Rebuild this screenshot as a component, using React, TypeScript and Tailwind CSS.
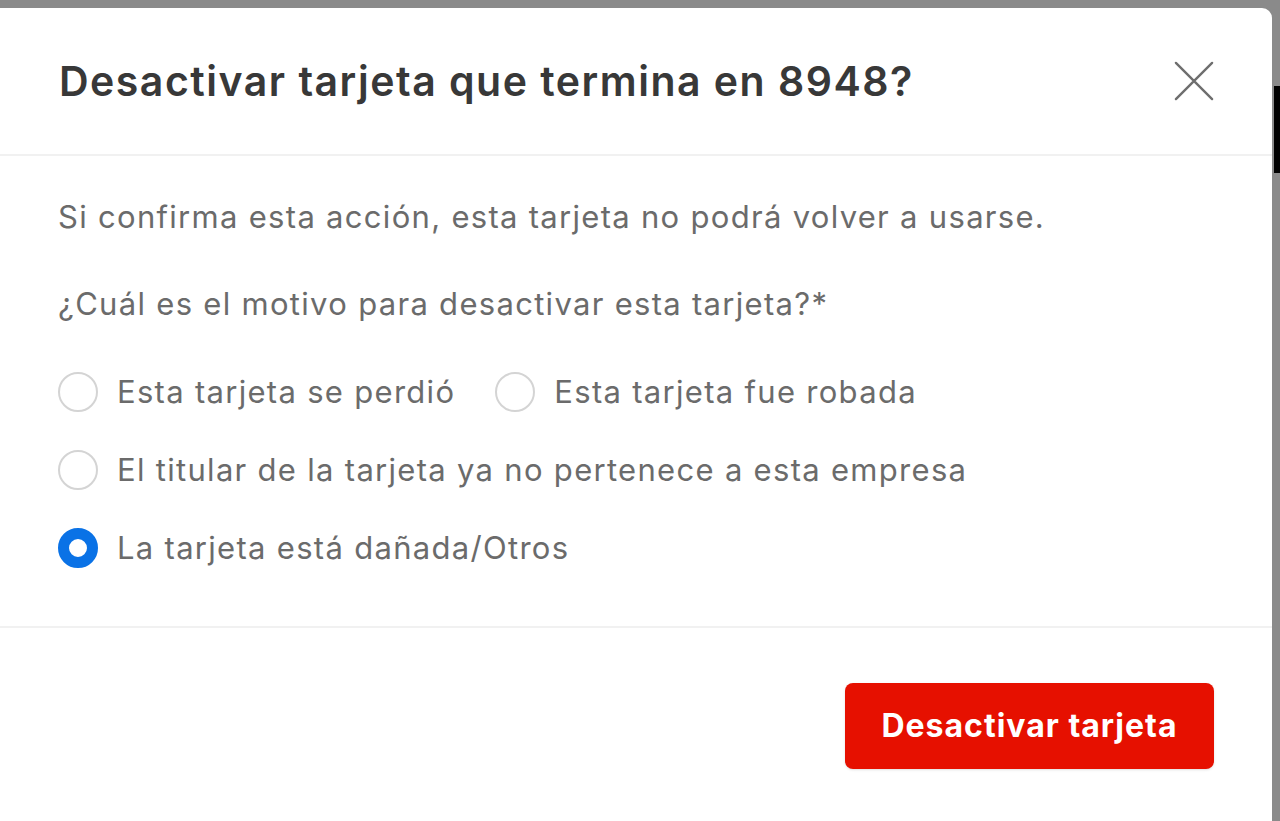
import { useState } from "react";

const reasons = [
  { id: "lost", label: "Esta tarjeta se perdió" },
  { id: "stolen", label: "Esta tarjeta fue robada" },
  { id: "left", label: "El titular de la tarjeta ya no pertenece a esta empresa" },
  { id: "damaged", label: "La tarjeta está dañada/Otros" },
];

function Radio({
  checked,
  label,
  onSelect,
}: {
  checked: boolean;
  label: string;
  onSelect: () => void;
}) {
  return (
    <button
      type="button"
      onClick={onSelect}
      className="flex h-10 items-center gap-[19px] text-left"
    >
      <span
        className={
          checked
            ? "h-10 w-10 shrink-0 rounded-full border-[11px] border-[#0a72e6] bg-white"
            : "h-10 w-10 shrink-0 rounded-full border-2 border-[#d4d4d4] bg-white"
        }
      />
      <span className="text-[31px] leading-10 tracking-[1.3px] text-[#6b6b6b]">
        {label}
      </span>
    </button>
  );
}

export default function App() {
  const [reason, setReason] = useState("damaged");

  return (
    <div
      className="flex h-[821px] w-[1280px] overflow-hidden bg-[#8a8a8a] pt-2"
      style={{ fontFamily: "Inter, 'Noto Sans', sans-serif" }}
    >
      <div className="flex h-[813px] w-[1272px] shrink-0 flex-col rounded-tr-[10px] bg-white">
        {/* header */}
        <div className="flex h-[148px] shrink-0 items-center justify-between border-b-2 border-[#f1f1f1] pl-[59px] pr-[58px]">
          <h2 className="text-[41px] font-semibold leading-[48px] tracking-[1.5px] text-[#383838]">
            Desactivar tarjeta que termina en 8948?
          </h2>
          <button type="button" className="flex h-10 w-10 items-center justify-center">
            <svg width="42" height="42" viewBox="0 0 42 42" fill="none">
              <path
                d="M2 2L40 40M40 2L2 40"
                stroke="#6e6e6e"
                strokeWidth="2.5"
                strokeLinecap="round"
              />
            </svg>
          </button>
        </div>

        {/* body */}
        <div className="flex shrink-0 flex-col border-b-2 border-[#f1f1f1] pb-[58px] pl-[58px] pt-[41px] text-[31px] leading-10 tracking-[1.3px] text-[#6b6b6b]">
          <p>Si confirma esta acción, esta tarjeta no podrá volver a usarse.</p>
          <p className="mt-[47px]">¿Cuál es el motivo para desactivar esta tarjeta?*</p>
          <div className="mt-[48px] flex flex-col gap-[38px]">
            <div className="flex items-center gap-10">
              <Radio
                checked={reason === reasons[0].id}
                label={reasons[0].label}
                onSelect={() => setReason(reasons[0].id)}
              />
              <Radio
                checked={reason === reasons[1].id}
                label={reasons[1].label}
                onSelect={() => setReason(reasons[1].id)}
              />
            </div>
            {reasons.slice(2).map((r) => (
              <Radio
                key={r.id}
                checked={reason === r.id}
                label={r.label}
                onSelect={() => setReason(r.id)}
              />
            ))}
          </div>
        </div>

        {/* footer */}
        <div className="flex flex-1 justify-end bg-white pr-[58px] pt-[55px]">
          <button
            type="button"
            className="h-[86px] w-[369px] rounded-[8px] bg-[#e61000] text-[32px] font-bold tracking-[1px] text-white shadow-sm"
          >
            Desactivar tarjeta
          </button>
        </div>
      </div>
      <div className="flex-1 pl-[2px]">
        <div className="mt-[78px] h-[87px] w-full bg-black" />
      </div>
    </div>
  );
}
